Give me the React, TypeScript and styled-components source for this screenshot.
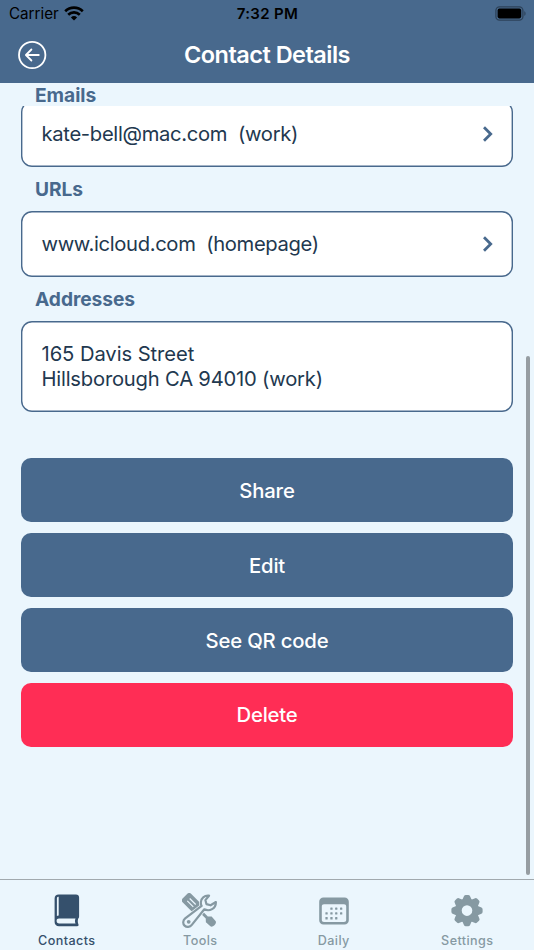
import React from 'react';
import styled, { createGlobalStyle } from 'styled-components';

const steel = '#48698d';
const navy = '#22384f';
const ice = '#ebf6fd';
const muted = '#8699a2';

const GlobalStyle = createGlobalStyle`
  *, *::before, *::after { box-sizing: border-box; }
  body { margin: 0; }
  button { font: inherit; border: 0; padding: 0; background: none; cursor: pointer; }
  svg { display: block; }
`;

const Screen = styled.div`
  width: 534px;
  height: 950px;
  display: flex;
  flex-direction: column;
  overflow: hidden;
  background: ${ice};
  font-family: Inter, 'Liberation Sans', sans-serif;
  white-space: pre;
`;

const Header = styled.header`
  flex: none;
  height: 82.5px;
  background: ${steel};
`;

const StatusBar = styled.div`
  height: 27px;
  display: grid;
  grid-template-columns: 1fr auto 1fr;
  align-items: center;
  padding: 0 8px 0 9px;
  font-size: 15.2px;
  color: #000;
`;

const Carrier = styled.div`
  display: flex;
  align-items: center;
  gap: 5px;
`;

const Clock = styled.div`
  font-weight: 600;
  font-size: 15px;
  letter-spacing: 0.35px;
`;

const BatterySlot = styled.div`
  justify-self: end;
`;

const TitleBar = styled.div`
  height: 54px;
  display: grid;
  grid-template-columns: 1fr auto 1fr;
  align-items: center;
  padding: 1px 17px 0;
`;

const BackButton = styled.button`
  justify-self: start;
`;

const Title = styled.h1`
  margin: 0 0 1px;
  font-size: 23.5px;
  font-weight: 600;
  letter-spacing: -0.52px;
  color: #fff;
`;

const Heading = styled.h2<{ $pinned?: boolean }>`
  flex: none;
  margin: 0;
  height: ${(p) => (p.$pinned ? 23.5 : 44.3)}px;
  padding-left: 35px;
  line-height: ${(p) => (p.$pinned ? 24 : 45)}px;
  font-size: 19.2px;
  font-weight: 700;
  letter-spacing: -0.05px;
  color: ${steel};
`;

const Body = styled.main`
  flex: 1;
  min-height: 0;
  display: grid;
  grid-template-columns: 1fr;
`;

const Scroller = styled.div`
  min-height: 0;
  overflow: hidden;
`;

const Details = styled.div`
  margin-top: -5px;
`;

const Card = styled.section<{ $tall?: boolean }>`
  height: ${(p) => (p.$tall ? 90.6 : 65.8)}px;
  margin: 0 21px;
  padding: 0 18.5px 0 20.5px;
  display: flex;
  align-items: center;
  justify-content: space-between;
  border-radius: 11px;
  box-shadow: inset 0 0 0 1.4px ${steel};
  background: #fff;
  font-size: 20.2px;
  line-height: 25px;
  color: ${navy};
`;

const Value = styled.span<{ $track: number }>`
  display: block;
  letter-spacing: ${(p) => p.$track}px;
`;

const Actions = styled.div`
  display: grid;
  gap: 10.6px;
  margin: 46.3px 21px 0;
`;

const Action = styled.button<{ $danger?: boolean }>`
  height: 64.3px;
  padding-top: 1px;
  border-radius: 10px;
  background: ${(p) => (p.$danger ? '#ff2d55' : steel)};
  color: #fff;
  font-size: 20.3px;
  line-height: 24px;
  font-weight: 500;
  letter-spacing: -0.18px;
`;

const ScrollThumb = styled.div`
  position: absolute;
  left: 526px;
  top: 356px;
  width: 4px;
  height: 519px;
  border-radius: 2px;
  background: #969da2;
`;

const TabBar = styled.nav`
  flex: none;
  height: 71px;
  display: grid;
  grid-template-columns: repeat(4, 1fr);
  border-top: 1px solid #a1a9ae;
`;

const Tab = styled.button<{ $active?: boolean }>`
  display: flex;
  flex-direction: column;
  align-items: center;
  justify-content: flex-start;
  padding-top: 13px;
  gap: 3px;
  color: ${(p) => (p.$active ? '#35506c' : muted)};
`;

const TabLabel = styled.span`
  font-size: 12.6px;
  line-height: 18px;
  font-weight: 500;
  letter-spacing: 0.4px;
`;

const WifiIcon = () => (
  <svg width="20" height="15" viewBox="0 0 20 15" fill="none" stroke="#000" strokeWidth="2.7">
    <path d="M1.2 5.2A12.8 12.8 0 0 1 18.8 5.2" />
    <path d="M4.2 8.7A8.5 8.5 0 0 1 15.8 8.7" />
    <path d="M10 14.5 6.9 11.4a4.5 4.5 0 0 1 6.2 0Z" fill="#000" stroke="none" />
  </svg>
);

const BatteryIcon = () => (
  <svg width="31" height="15" viewBox="0 0 31 15">
    <rect x=".9" y=".9" width="27" height="13.2" rx="3.6" fill="none" stroke="#2d4259" strokeWidth="1.3" />
    <rect x="2.6" y="2.6" width="23.6" height="9.8" rx="1.8" fill="#000" />
    <path d="M29.3 5.2c1.7.6 1.7 4 0 4.6Z" fill="#2d4259" />
  </svg>
);

const BackIcon = () => (
  <svg width="30" height="30" viewBox="0 0 30 30" fill="none" stroke="#fff" strokeWidth="1.8" strokeLinecap="round" strokeLinejoin="round">
    <circle cx="15.2" cy="15" r="13.2" />
    <path d="M21.8 15H9M14.4 9.5 8.9 15l5.5 5.5" />
  </svg>
);

const Chevron = () => (
  <svg width="14" height="18" viewBox="0 0 14 18" fill="none" stroke={steel} strokeWidth="2.8">
    <path d="m3 2.3 6.7 6.7L3 15.7" />
  </svg>
);

const BookIcon = () => (
  <svg width="34" height="36" viewBox="0 0 34 36" fill="currentColor">
    <path
      fillRule="evenodd"
      d="M8.700 1.500H26c1.900 0 3.100 1.200 3.100 3v18.800c0 1.200-.3 1.900-1 2.400-.5 1.900-.4 3.800.3 5.500.5 1-.1 2-1.200 2H9C6.300 33.200 4.600 31.500 4.600 29V5.500c0-2.500 1.600-4 4.100-4ZM9 25.400c-1.500 0-2.400.8-2.400 2.300 0 1.700.9 2.800 2.600 2.800h16.300c-.7-1.700-.7-3.400 0-5.100ZM8 3.800c-.7.200-1.100.7-1.100 1.500V23c.4-.4 1-.6 1.800-.6V3.800Z"
    />
  </svg>
);

const wrench =
  'M27 2.700c-4.500-.5-8.200 2.600-8.200 6.700 0 1.500.3 2.600.8 3.500L3.200 25.400c-2.400 2-2.600 5.200-.6 7.200 2.100 2.100 5.400 1.700 7.200-.7l12.500-15.600c5.200 2.600 11.700-.7 11.600-7.300l-5.300 3.300-4.200-1.200-1-4Z';

const ToolsIcon = () => (
  <svg width="36" height="36" viewBox="0 0 36 36" fill="none">
    <g transform="translate(17.8 18) rotate(-45)">
      <path
        d="M-3-21h6q3 0 3 3V-2.500q0 3-3 3h-1.200V9.500l2.600 2.800-.4 6c-.3 2.800-7 2.800-7.300 0l-.4-6 2.600-2.800V.5H-3q-3 0-3-3V-18q0-3 3-3Z"
        fill="currentColor"
      />
      <path d="M-1.700-16v8.500M1.700-16v8.500" stroke={ice} strokeWidth="1.200" />
    </g>
    <path d={wrench} stroke={ice} strokeWidth="3.600" />
    <path d={wrench} fill={ice} stroke="currentColor" strokeWidth="2.200" strokeLinejoin="round" />
    <circle cx="6.700" cy="28.800" r="1.900" fill="currentColor" />
  </svg>
);

const calendarDots = [
  [13.2, 14.5], [18, 14.5], [22.9, 14.5],
  [8.3, 19.3], [13.2, 19.3], [18, 19.3], [22.9, 19.3],
  [8.3, 24.1], [13.2, 24.1], [18, 24.1],
];

const CalendarIcon = () => (
  <svg width="32" height="36" viewBox="0 0 32 36" fill="currentColor">
    <path
      fillRule="evenodd"
      d="M5.500 4.500h21c2.500 0 4.300 1.700 4.300 4.200v18.600c0 2.500-1.800 4.200-4.300 4.200h-21c-2.500 0-4.300-1.700-4.300-4.200V8.700c0-2.500 1.800-4.200 4.300-4.200ZM6 11.300c-1.400 0-2.200.8-2.200 2.100v13.400c0 1.400.8 2.200 2.200 2.200h20c1.400 0 2.200-.8 2.200-2.200V13.400c0-1.300-.8-2.100-2.200-2.100Z"
    />
    {calendarDots.map(([x, y]) => (
      <rect key={`${x}-${y}`} x={x - 0.9} y={y} width="2.3" height="2.3" rx=".5" />
    ))}
  </svg>
);

const GearIcon = () => (
  <svg width="36" height="36" viewBox="0 0 36 36">
    <circle cx="18" cy="17.6" r="8.6" fill="none" stroke="currentColor" strokeWidth="6.6" />
    {[0, 45, 90, 135, 180, 225, 270, 315].map((angle) => (
      <path
        key={angle}
        d="M12.800 8.100 14.700 3.700q.4-1.700 1.900-1.700h2.800q1.500 0 1.900 1.700l1.900 4.400Z"
        transform={`rotate(${angle} 18 17.6)`}
        fill="currentColor"
      />
    ))}
  </svg>
);

export default function App() {
  return (
    <>
      <GlobalStyle />
      <Screen>
        <Header>
          <StatusBar>
            <Carrier>
              Carrier
              <WifiIcon />
            </Carrier>
            <Clock>7:32 PM</Clock>
            <BatterySlot>
              <BatteryIcon />
            </BatterySlot>
          </StatusBar>
          <TitleBar>
            <BackButton aria-label="Back">
              <BackIcon />
            </BackButton>
            <Title>Contact Details</Title>
          </TitleBar>
        </Header>
        <Heading $pinned>Emails</Heading>
        <Body>
          <Scroller>
            <Details>
              <Card>
                <Value $track={-0.31}>kate-bell@mac.com  (work)</Value>
                <Chevron />
              </Card>
              <Heading>URLs</Heading>
              <Card>
                <Value $track={-0.34}>www.icloud.com  (homepage)</Value>
                <Chevron />
              </Card>
              <Heading>Addresses</Heading>
              <Card $tall>
                <div>
                  <Value $track={-0.07}>165 Davis Street</Value>
                  <Value $track={-0.2}>Hillsborough CA 94010 (work)</Value>
                </div>
              </Card>
            </Details>
            <Actions>
              <Action>Share</Action>
              <Action>Edit</Action>
              <Action>See QR code</Action>
              <Action $danger>Delete</Action>
            </Actions>
          </Scroller>
          <ScrollThumb />
        </Body>
        <TabBar>
          <Tab $active>
            <BookIcon />
            <TabLabel>Contacts</TabLabel>
          </Tab>
          <Tab>
            <ToolsIcon />
            <TabLabel>Tools</TabLabel>
          </Tab>
          <Tab>
            <CalendarIcon />
            <TabLabel>Daily</TabLabel>
          </Tab>
          <Tab>
            <GearIcon />
            <TabLabel>Settings</TabLabel>
          </Tab>
        </TabBar>
      </Screen>
    </>
  );
}
